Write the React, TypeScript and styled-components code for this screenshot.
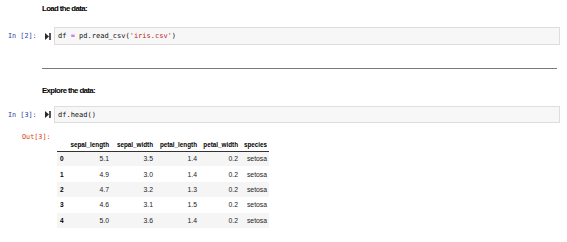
import React from "react";
import styled, { createGlobalStyle } from "styled-components";

const GlobalStyle = createGlobalStyle`
  body {
    margin: 0;
    background: #ffffff;
  }
`;

type Token = { text: string; kind?: "op" | "str" };

const rows = [
  ["0", "5.1", "3.5", "1.4", "0.2", "setosa"],
  ["1", "4.9", "3.0", "1.4", "0.2", "setosa"],
  ["2", "4.7", "3.2", "1.3", "0.2", "setosa"],
  ["3", "4.6", "3.1", "1.5", "0.2", "setosa"],
  ["4", "5.0", "3.6", "1.4", "0.2", "setosa"],
];

const columns = [
  { name: "", width: 12 },
  { name: "sepal_length", width: 42 },
  { name: "sepal_width", width: 44 },
  { name: "petal_length", width: 44 },
  { name: "petal_width", width: 41 },
  { name: "species", width: 29 },
];

const RunIcon: React.FC = () => (
  <svg width="6" height="7" viewBox="0 0 6 7">
    <polygon points="0,0 4,3.5 0,7" fill="#2b2b2b" />
    <rect x="4.2" y="0" width="1.6" height="7" fill="#2b2b2b" />
  </svg>
);

const CodeCell: React.FC<{ n: number; tokens: Token[]; tall?: boolean }> = ({
  n,
  tokens,
  tall,
}) => (
  <CellRow>
    <Prompt>In [{n}]:</Prompt>
    <RunSlot>
      <RunIcon />
    </RunSlot>
    <InputBox $tall={tall}>
      {tokens.map((t, i) => (
        <Tok key={i} $kind={t.kind}>
          {t.text}
        </Tok>
      ))}
    </InputBox>
  </CellRow>
);

const App: React.FC = () => {
  return (
    <Notebook>
      <GlobalStyle />
      <Heading>Load the data:</Heading>
      <CellGap $top={13}>
        <CodeCell
          n={2}
          tall
          tokens={[
            { text: "df " },
            { text: "=", kind: "op" },
            { text: " pd.read_csv(" },
            { text: "'iris.csv'", kind: "str" },
            { text: ")" },
          ]}
        />
      </CellGap>
      <Rule />
      <Heading $top={17}>Explore the data:</Heading>
      <CellGap $top={10}>
        <CodeCell n={3} tokens={[{ text: "df.head()" }]} />
      </CellGap>
      <OutputRow>
        <OutPrompt>Out[3]:</OutPrompt>
        <Frame>
          <colgroup>
            {columns.map((c, i) => (
              <col key={i} style={{ width: c.width }} />
            ))}
          </colgroup>
          <thead>
            <tr>
              {columns.map((c, i) => (
                <HeadCell key={i}>{c.name}</HeadCell>
              ))}
            </tr>
          </thead>
          <tbody>
            {rows.map((r, i) => (
              <DataRow key={i} $striped={i % 2 === 0}>
                <IndexCell>{r[0]}</IndexCell>
                {r.slice(1).map((v, j) => (
                  <DataCell key={j}>{v}</DataCell>
                ))}
              </DataRow>
            ))}
          </tbody>
        </Frame>
      </OutputRow>
    </Notebook>
  );
};

const Notebook = styled.div`
  width: 567px;
  height: 242px;
  padding-top: 4px;
  box-sizing: border-box;
  overflow: hidden;
  background: #ffffff;
`;

const Heading = styled.div<{ $top?: number }>`
  margin: ${(p) => p.$top ?? 0}px 0 0 42px;
  font-family: "Liberation Sans", Arial, sans-serif;
  font-weight: bold;
  font-size: 7.8px;
  letter-spacing: -0.6px;
  line-height: 10px;
  height: 10px;
  color: #000;
`;

const CellGap = styled.div<{ $top: number }>`
  margin-top: ${(p) => p.$top}px;
`;

const CellRow = styled.div`
  display: flex;
  align-items: center;
`;

const Prompt = styled.div`
  width: 35px;
  padding-left: 8px;
  box-sizing: border-box;
  font-family: "DejaVu Sans Mono", "Liberation Mono", monospace;
  font-size: 6.8px;
  color: #303f9f;
  white-space: nowrap;
`;

const RunSlot = styled.div`
  width: 19px;
  display: flex;
  justify-content: flex-start;
  padding-left: 10px;
  box-sizing: border-box;
`;

const InputBox = styled.div<{ $tall?: boolean }>`
  width: 506px;
  height: ${(p) => (p.$tall ? 18 : 17)}px;
  box-sizing: border-box;
  background: #f7f7f7;
  border: 1px solid #dedede;
  padding-left: 3px;
  display: flex;
  align-items: center;
  font-family: "DejaVu Sans Mono", "Liberation Mono", monospace;
  font-size: 7px;
  white-space: pre;
  color: #111;
`;

const Tok = styled.span<{ $kind?: "op" | "str" }>`
  color: ${(p) =>
    p.$kind === "op" ? "#aa22ff" : p.$kind === "str" ? "#ba2121" : "#111"};
`;

const Rule = styled.div`
  margin: 23px 0 0 42px;
  width: 515px;
  height: 1px;
  background: #7a7a7a;
`;

const OutputRow = styled.div`
  margin-top: 6px;
  display: flex;
  align-items: flex-start;
`;

const OutPrompt = styled.div`
  width: 57px;
  padding: 3px 0 0 22px;
  box-sizing: border-box;
  font-family: "DejaVu Sans Mono", "Liberation Mono", monospace;
  font-size: 6.8px;
  line-height: 10px;
  color: #d84315;
  white-space: nowrap;
`;

const Frame = styled.table`
  margin-top: 6px;
  border-collapse: collapse;
  table-layout: fixed;
  width: 212px;
  font-family: "Liberation Sans", Arial, sans-serif;
  color: #000;
`;

const HeadCell = styled.th`
  height: 16px;
  padding: 0 2px 3px 0;
  box-sizing: border-box;
  text-align: right;
  vertical-align: bottom;
  font-size: 6.3px;
  font-weight: bold;
  white-space: nowrap;
  border-bottom: 1px solid #333;
`;

const DataRow = styled.tr<{ $striped: boolean }>`
  height: 15.4px;
  background: ${(p) => (p.$striped ? "#f5f5f5" : "#ffffff")};
`;

const IndexCell = styled.th`
  padding: 0 0 0 3px;
  text-align: left;
  font-size: 6.5px;
  font-weight: bold;
`;

const DataCell = styled.td`
  padding: 0 2px 0 0;
  text-align: right;
  font-size: 6.8px;
  color: #222;
  white-space: nowrap;
`;

export default App;
